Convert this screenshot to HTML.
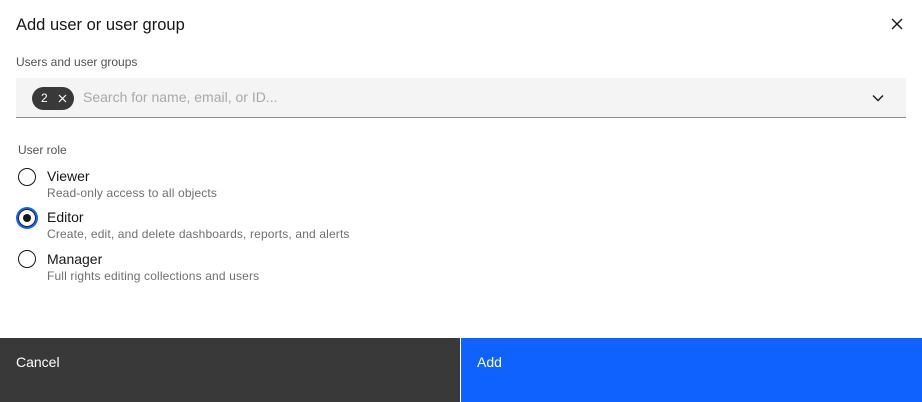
<!DOCTYPE html>
<html><head><style>
*{margin:0;padding:0;box-sizing:border-box}
body{width:922px;height:402px;background:#fff;font-family:"Liberation Sans",sans-serif;color:#161616;position:relative;overflow:hidden}
.a{position:absolute;white-space:nowrap}
.r{position:absolute;left:18px;width:18px;height:18px;border:1px solid #161616;border-radius:50%}
.l{font-size:14px;left:47px}
.d{font-size:12px;color:#6f6f6f;left:47px;letter-spacing:0.15px}
</style></head><body>
<div class="a" style="left:16px;top:16px;font-size:16.5px">Add user or user group</div>
<svg class="a" style="left:891px;top:18px" width="12" height="12" viewBox="0 0 12 12"><path d="M1 1L11 11M11 1L1 11" stroke="#161616" stroke-width="1.4"/></svg>
<div class="a" style="left:16px;top:55px;font-size:12px;color:#525252">Users and user groups</div>
<div class="a" style="left:16px;top:78px;width:890px;height:40px;background:#f4f4f4;border-bottom:1px solid #8d8d8d"></div>
<div class="a" style="left:32px;top:87px;width:42px;height:23px;background:#393939;border-radius:12px;color:#fff;font-size:12px;line-height:23px;padding-left:9px">2</div>
<svg class="a" style="left:58px;top:94px" width="9" height="9" viewBox="0 0 9 9"><path d="M1 1L8 8M8 1L1 8" stroke="#fff" stroke-width="1.2"/></svg>
<div class="a" style="left:83px;top:89px;font-size:14px;color:#a8a8a8">Search for name, email, or ID...</div>
<svg class="a" style="left:872px;top:94px" width="12" height="8" viewBox="0 0 12 8"><path d="M1 1.5L6 6.5L11 1.5" stroke="#161616" stroke-width="1.4" fill="none"/></svg>
<div class="a" style="left:18px;top:143px;font-size:12px;color:#525252">User role</div>
<div class="r" style="top:168px"></div>
<div class="a l" style="top:168px">Viewer</div>
<div class="a d" style="top:186px">Read-only access to all objects</div>
<div class="r" style="top:209px;box-shadow:0 0 0 2px #0f62fe;border-color:#161616"></div>
<div class="a" style="left:23px;top:214px;width:8px;height:8px;border-radius:50%;background:#161616"></div>
<div class="a l" style="top:209px">Editor</div>
<div class="a d" style="top:227px">Create, edit, and delete dashboards, reports, and alerts</div>
<div class="r" style="top:250px"></div>
<div class="a l" style="top:251px">Manager</div>
<div class="a d" style="top:269px">Full rights editing collections and users</div>
<div class="a" style="left:0;top:338px;width:460px;height:64px;background:#393939;color:#fff;font-size:14px;padding:16px">Cancel</div>
<div class="a" style="left:461px;top:338px;width:461px;height:64px;background:#0f62fe;color:#fff;font-size:14px;padding:16px">Add</div>
</body></html>
